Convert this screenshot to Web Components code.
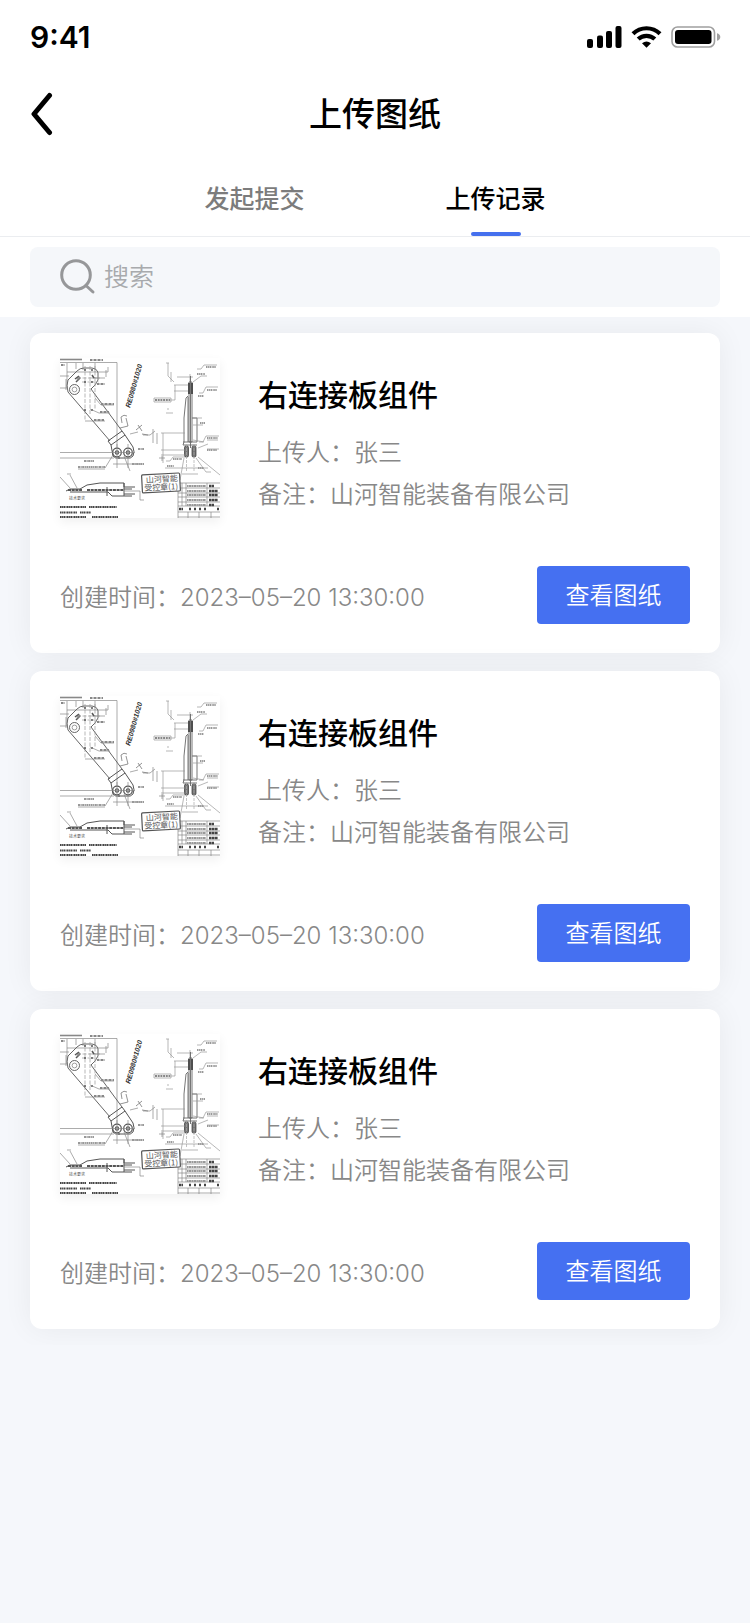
<!DOCTYPE html>
<html lang="zh-CN">
<head>
<meta charset="utf-8">
<meta name="viewport" content="width=device-width, initial-scale=1">
<title>上传图纸</title>
<style>
  html { min-height: 100%; background: #f5f7fb; }
  body { margin: 0; color: #000; font-family: Inter, "Noto Sans CJK SC", sans-serif; }
</style>
</head>
<body>
<upload-page></upload-page>

<script>
const define = (name, html, setup) => {
  const template = document.createElement('template');
  template.innerHTML = html;
  customElements.define(name, class extends HTMLElement {
    constructor() {
      super();
      this.attachShadow({ mode: 'open' }).append(template.content.cloneNode(true));
      if (setup) setup(this.shadowRoot);
    }
  });
};

define('status-bar', `
  <style>
    :host { display: flex; align-items: center; justify-content: space-between; height: 74px; padding: 0 29px 0 30px; }
    time { font-size: 30px; line-height: 36px; font-weight: 600; }
    .icons { display: flex; align-items: center; gap: 9px; }
    svg { display: block; }
  </style>
  <time>9:41</time>
  <div class="icons">
    <svg width="35" height="22" aria-label="信号"><rect y="13" width="6" height="9" rx="2"/><rect x="10" y="9.500" width="6" height="12.500" rx="2"/><rect x="19" y="5" width="6" height="17" rx="2"/><rect x="28.500" width="6" height="22" rx="2"/></svg>
    <svg width="31" height="22" viewBox="0 0 31 22" aria-label="无线网络"><g fill="none" stroke="#000" stroke-width="4.200"><path d="M2 7.700C9.500 .400 21.500 .400 29 7.700"/><path d="M7.200 13.100C11.800 8.700 19.200 8.700 23.800 13.100"/></g><path d="M11 17.300Q15.500 13.600 20 17.300L15.500 21.800Z"/></svg>
    <svg width="50" height="22" viewBox="0 0 50 22" aria-label="电量"><rect x="1" y="1" width="42.500" height="20" rx="5.500" fill="none" stroke="#a0a0a0" stroke-width="1.600"/><rect x="4" y="4" width="36.500" height="14" rx="3"/><path d="M46 7.200Q49.300 8.200 49.300 11T46 14.800Z" fill="#a0a0a0"/></svg>
  </div>`);

define('nav-bar', `
  <style>
    :host { display: grid; grid-template-columns: 60px 1fr 60px; align-items: center; height: 80px; }
    button { justify-self: end; width: 32px; height: 44px; padding: 0; border: 0; background: none; cursor: pointer; }
    svg { display: block; }
    h1 { margin: 0; text-align: center; font-size: 33px; line-height: 48px; font-weight: 500; }
  </style>
  <button type="button" aria-label="返回"><svg width="26" height="44" viewBox="0 0 26 44"><path d="M21.500 3.500L6 22L21.500 40.500" fill="none" stroke="#000" stroke-width="5" stroke-linecap="round" stroke-linejoin="round"/></svg></button>
  <h1><slot></slot></h1>`);

define('tab-bar', `
  <style>
    :host { display: block; border-bottom: 1px solid #ebedf0; }
    nav { display: flex; justify-content: center; gap: 140px; }
    ::slotted(a) { display: block; width: 101px; height: 82px; color: #7c7c7c; font-size: 25px; line-height: 90px; font-weight: 500; text-align: center; text-decoration: none; white-space: nowrap; }
    ::slotted(a[aria-current]) { display: grid; grid-template-rows: 78px 4px; justify-items: center; color: #000; }
    ::slotted(a[aria-current])::after { content: ""; width: 50px; height: 4px; border-radius: 2px; background: #4570ee; }
  </style>
  <nav><slot></slot></nav>`);

define('search-box', `
  <style>
    :host { display: block; padding: 10px 30px; }
    label { display: flex; align-items: center; gap: 8px; height: 60px; padding: 0 30px; border-radius: 8px; background: #f5f7fa; box-sizing: border-box; }
    svg { flex: none; }
    input { flex: 1; min-width: 0; height: 40px; padding: 0 0 4px; box-sizing: border-box; border: 0; outline: 0; background: none; color: #333; font: 350 25px/36px "Noto Sans CJK SC", sans-serif; }
    input::placeholder { color: #a8aaad; opacity: 1; }
  </style>
  <label>
    <svg width="36" height="36" viewBox="0 0 36 36" fill="none" stroke="#969799" stroke-width="3" stroke-linecap="round" aria-hidden="true"><circle cx="16" cy="16" r="14.300"/><path d="M26.500 27L33 33"/></svg>
    <input type="search" placeholder="搜索" aria-label="搜索">
  </label>`);

define('part-drawing', `
  <style>
    :host { display: block; width: 160px; height: 160px; background: #fff; box-shadow: 0 4px 10px rgba(0,0,0,.06); }
    svg { display: block; }
    text { font-family: "Noto Sans CJK SC", sans-serif; fill: #555; }
    .number { font: italic 700 7px "Liberation Sans", sans-serif; fill: #333; }
  </style>
  <svg width="160" height="160" viewBox="0 0 160 160" fill="none" stroke="#888" stroke-width=".7" role="img" aria-label="右连接板组件图纸">
    <!-- bracket, front view -->
    <path d="M0 1.500H22" stroke-width="1.600" stroke="#888"/>
    <path d="M0 4.500H57V90M7 5V30M16 5V11M0 18H9M7 14H48V9M32 20H45M46 12V19M23 5V12M35 5V14"/>
    <path d="M50 83L8 34Q6 27 8 22L17 13Q20 10 24 10H32Q39 11 38 18V22Q36 27 31 31L62 73" stroke="#666" stroke-width="1"/>
    <path d="M48 83L62 73L65 77L51 87ZM51 87L53 98Q55 101 60 100M65 77L73 89Q75 94 73 98Q71 101 66 100H58" stroke="#555" stroke-width="1"/>
    <circle cx="14.500" cy="31.500" r="5" stroke="#555" stroke-width=".9"/><circle cx="14.500" cy="31.500" r="2.400" stroke="#777"/>
    <path d="M25 8V63M30 8V57M35 8V52M22 24H39M17 20H40" stroke-dasharray="4 1.500" stroke="#999"/>
    <path d="M24 12H26M31 12H33M24 24H26M31 24H33M24 52H26M31 52H33M32 17L34 20M15 21L19 18M16 24L20 20" stroke="#555" stroke-width="1.500"/>
    <path d="M30 2H43M37 26H45M41 46H54M40 54H49M34 62H44M20 19L17 22M1 7H5" stroke="#888" stroke-width="2" stroke-dasharray="2 .5 1 .5"/>
    <path d="M35 40L41 47H54M30 51L39 55H50M25 63H45M6 21V32M0 30H8"/>
    <!-- plate holes and dimensions -->
    <g stroke="#555" stroke-width="1.200"><circle cx="57" cy="94.500" r="4.300"/><circle cx="68" cy="94.500" r="4.300"/><circle cx="57" cy="94.500" r="1.600"/><circle cx="68" cy="94.500" r="1.600"/></g>
    <path d="M0 94.500H75M0 100H54M57 86V110M68 86V110M53 106H82M45 110L53 97M18 111H45M64 98L70 113M70 76L78 74"/>
    <path d="M18 109H45M24 103H34M72 106H84M78 91H84" stroke-width="2.200" stroke="#999" stroke-dasharray="2 .5 1.200 .5"/>
    <path d="M62 65L61 59Q64 56 67 58M60 70L68 68L66 60M76 72L82 67M78 67L82 73M82 76L88 77" stroke="#666"/>
    <text class="number" stroke="none" transform="translate(70 50) rotate(-74)">RE0980#1020</text>
    <!-- side view -->
    <path d="M6 133L10 131H20L27 127L40 125H64V129H75M20 134H48L52 138H64V125M47 129V138M64 131H72M64 136H75M64 138H72M10 134H20" stroke="#555" stroke-width="1"/>
    <path d="M8 132H22M27 132H64" stroke="#555" stroke-width="2" stroke-dasharray="3 .7"/>
    <path d="M0 119L10 130M10 117L17 130M7 116H11M64 133H80V142H84"/>
    <!-- end view -->
    <path d="M108 5V18L114 24M111 14V24M106 5H109M130 16V24M117 19H133M114 27H128M114 33H128M115 27V42H110" stroke="#999"/>
    <path d="M129 24H132V84H129ZM130.500 18V90M128 38L126 40L124 60V84M128 39V84M132 60H137V84M123 84H137M124 84L123 87H137" stroke="#666" stroke-width=".9"/>
    <path d="M129 25V36M132 25V36" stroke="#222" stroke-width="1.400"/>
    <g fill="#777" stroke="#333"><rect x="124.500" y="88" width="4" height="11" rx="1.500"/><rect x="132" y="88" width="4" height="11" rx="1.500"/></g>
    <path d="M126.500 86V114M134 86V114" stroke="#aaa" stroke-dasharray="3 1"/>
    <path d="M103 75V105M101 75H125M101 92H125M101 97H125M105 110H148M124 100L120 122M136 100L146 114H151M138 99L160 117M122 116H138M133 82L144 84M138 90L148 86M133 60H142M133 24L141 18H147M133 67H143" stroke="#999"/>
    <path d="M137 11H141L144 7H157M139 35H143L146 29H158M139 84H143L146 78H159M147 82H158M147 91H159M106 103H110L113 99H125" stroke="#999"/>
    <path d="M146 9H156M147 32H157M147 80H158M147 92H157M137 16H145M138 38H144M140 65H145M138 110H144M107 108H114M113 101H122" stroke="#999" stroke-width="2.200" stroke-dasharray="1.500 .6 1 .5"/>
    <path d="M94 40H111V44H94ZM106 55H113M108 50V52" stroke="#999"/><path d="M95 42H110" stroke-width="2" stroke-dasharray="2 .7"/>
    <path d="M93 71V85M97 75V86M83 77H90L95 73M102 98V103M99 100H105"/>
    <!-- revision table -->
    <path d="M118 125H160M118 130H160M118 135H160M118 139H160M118 144H160M118 148H160M118 154H160M118 159H160M118 125V160M122 125V148M126 125V148M147 125V148M128 154V160M139 154V160M151 154V160"/>
    <path d="M127 128H146M127 133H146M127 137H146M127 142H146M127 147H146" stroke-width="2" stroke="#999" stroke-dasharray="1.500 .4 2.400 .4"/>
    <path d="M149 128H154M149 133H158M149 137H158M149 142H158M149 147H154M119 151H123M129 151H131M134 151H136M139 151H141M144 151H146M157 151H159" stroke="#444" stroke-width="2.400" stroke-dasharray="2.400 .4"/>
    <path d="M0 149H26M29 149H57M0 154.500H17M20 154.500H31M0 159H26M32 159H58" stroke="#444" stroke-width="2.200" stroke-dasharray="1.600 .5 1 .4"/>
    <text x="9" y="142" font-size="4" stroke="none">技术要求</text>
    <g transform="rotate(-3 100 125)">
      <rect x="82" y="116" width="38" height="18" rx="1" stroke="#555" stroke-width="1.200" fill="#fff"/>
      <g stroke="none"><text x="86" y="124" font-size="8">山河智能</text><text x="84" y="132" font-size="8">受控章(1)</text></g>
    </g>
  </svg>`);

define('record-card', `
  <style>
    :host { display: block; padding: 25px 30px 29px; border-radius: 12px; background: #fff; box-shadow: 0 0 30px rgba(0,0,0,.06); }
    .summary { display: flex; gap: 38px; }
    part-drawing { flex: none; }
    h2 { margin: 15px 0; font-size: 30px; line-height: 44px; font-weight: 500; }
    p { margin: 0; color: #888; font-size: 24px; line-height: 42px; font-weight: 350; }
    footer { display: flex; align-items: center; justify-content: space-between; margin-top: 48px; }
    footer p { padding-top: 6px; }
    button { width: 153px; height: 58px; padding: 0 0 2px; border: 0; border-radius: 4px; background: #4570f1; color: #fff; font: 350 24px/36px "Noto Sans CJK SC", sans-serif; cursor: pointer; }
  </style>
  <article>
    <div class="summary">
      <part-drawing></part-drawing>
      <div>
        <h2><slot name="title"></slot></h2>
        <p>上传人：<slot name="uploader"></slot></p>
        <p>备注：<slot name="note"></slot></p>
      </div>
    </div>
    <footer>
      <p>创建时间：<slot name="created"></slot></p>
      <button type="button">查看图纸</button>
    </footer>
  </article>`);

define('upload-page', `
  <style>
    :host { display: block; }
    header { position: relative; z-index: 1; background: #fff; }
    main { display: flex; flex-direction: column; gap: 18px; padding: 16px 30px; }
  </style>
  <header>
    <status-bar></status-bar>
    <nav-bar>上传图纸</nav-bar>
    <tab-bar><a href="#submit">发起提交</a><a href="#records" aria-current="page">上传记录</a></tab-bar>
    <search-box></search-box>
  </header>
  <main></main>`, root => {
  const record = { title: '右连接板组件', uploader: '张三', note: '山河智能装备有限公司', created: '2023–05–20 13:30:00' };
  for (const item of [record, record, record]) {
    const card = document.createElement('record-card');
    for (const [slot, text] of Object.entries(item)) {
      const span = document.createElement('span');
      span.slot = slot;
      span.textContent = text;
      card.append(span);
    }
    root.querySelector('main').append(card);
  }
});
</script>
</body>
</html>
